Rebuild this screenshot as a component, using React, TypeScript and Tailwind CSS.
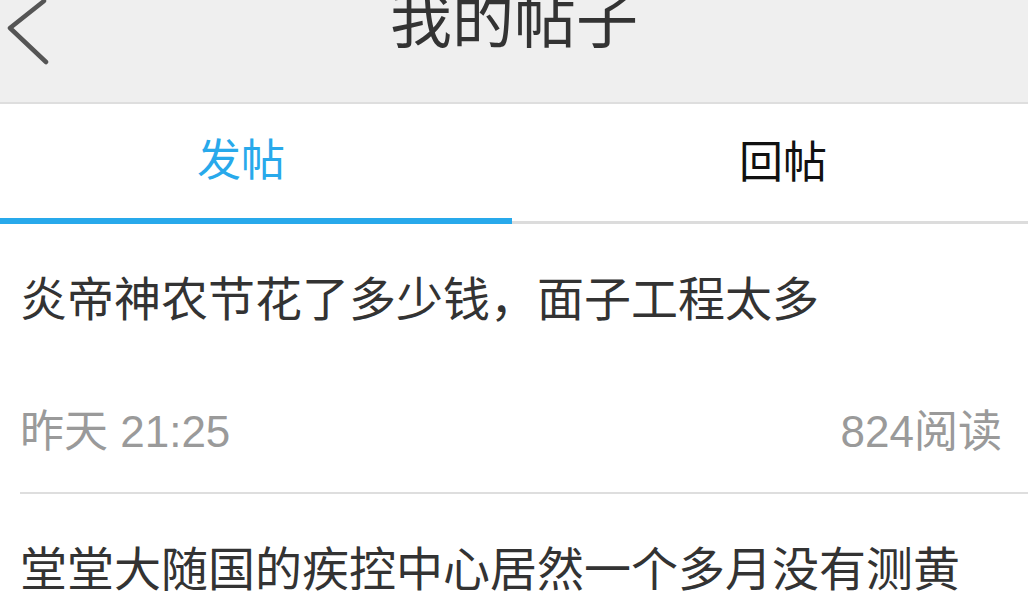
import { ReactNode } from "react";

const FONT = { fontFamily: '"Liberation Sans", "Noto Sans CJK SC", sans-serif' };

const posts = [
  { title: "炎帝神农节花了多少钱，面子工程太多", time: "昨天 21:25", reads: 824 },
  { title: "堂堂大随国的疾控中心居然一个多月没有测黄", time: "昨天 18:02", reads: 1136 },
];

const BackIcon = (): JSX.Element => (
  <svg width="52" height="66" viewBox="0 0 52 66" className="absolute left-0 top-0">
    <path
      d="M44 1 L10 28 L46 62"
      fill="none"
      stroke="#555"
      strokeWidth="4.5"
      strokeLinecap="round"
      strokeLinejoin="round"
    />
  </svg>
);

const Tab = ({ children, active }: { children: ReactNode; active?: boolean }): JSX.Element =>
  active ? (
    <div className="w-[512px] flex items-center justify-center pr-[30px] border-b-[6px] border-[#28a9eb] text-[#28a9eb]">
      <span className="text-[44px] leading-[44px]">{children}</span>
    </div>
  ) : (
    <div className="flex-1 flex items-center justify-center pl-[26px] border-b-[3px] border-[#dcdcdc] text-[#111]">
      <span className="text-[44px] leading-[44px]">{children}</span>
    </div>
  );

const PostItem = ({ title, time, reads }: { title: string; time: string; reads: number }): JSX.Element => (
  <div className="ml-[20px] pr-[26px] border-b-2 border-[#dedede]">
    <div className="pt-[52px] text-[47px] leading-[47px] text-[#333] whitespace-nowrap">{title}</div>
    <div className="mt-[87px] pb-[38px] flex justify-between text-[44px] leading-[44px] text-[#9a9a9a]">
      <span>{time}</span>
      <span>{reads}阅读</span>
    </div>
  </div>
);

export default function App(): JSX.Element {
  return (
    <div className="w-[1028px] h-[600px] overflow-hidden bg-white" style={FONT}>
      <header className="relative h-[104px] bg-[#efefef] border-b-2 border-[#dedede] flex justify-center">
        <BackIcon />
        <h1 className="-mt-[9px] text-[62px] leading-[62px] text-[#333] font-normal">我的帖子</h1>
      </header>
      <nav className="flex h-[120px]">
        <Tab active>发帖</Tab>
        <Tab>回帖</Tab>
      </nav>
      <div>
        {posts.map((p) => (
          <PostItem key={p.title} {...p} />
        ))}
      </div>
    </div>
  );
}
